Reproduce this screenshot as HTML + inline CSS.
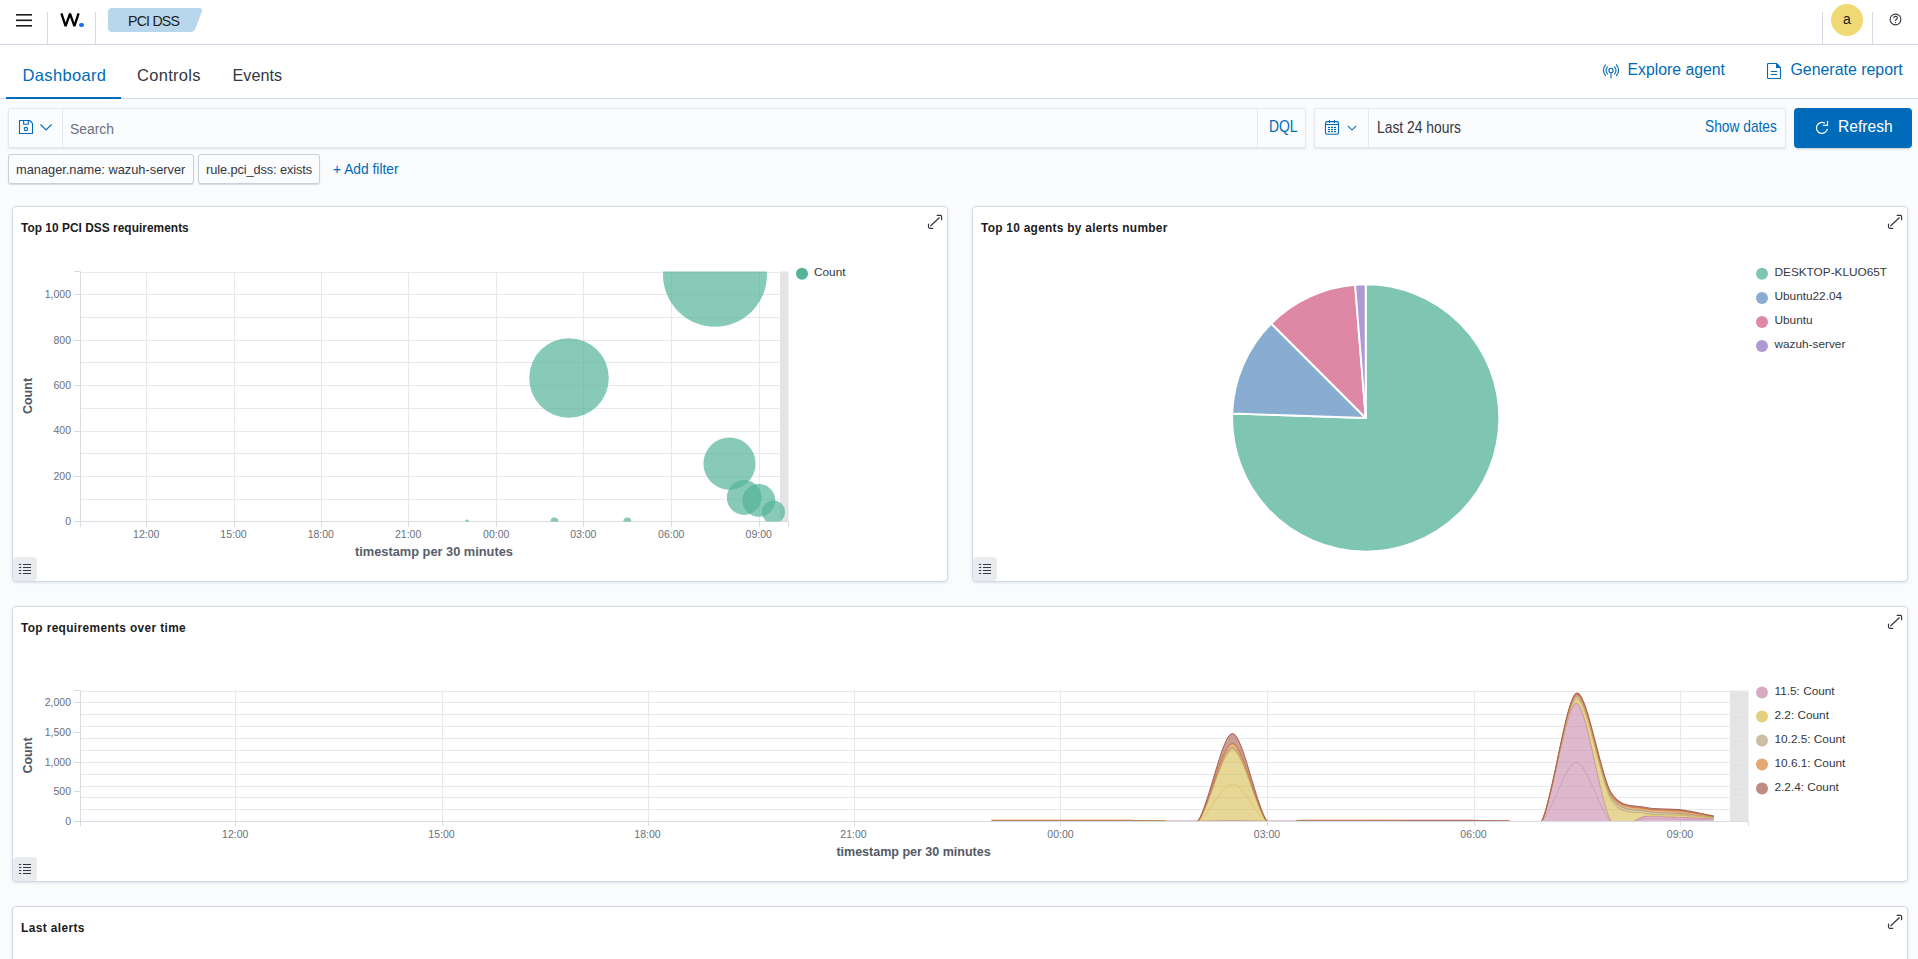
<!DOCTYPE html>
<html><head><meta charset="utf-8">
<style>
*{box-sizing:border-box;margin:0;padding:0}
html,body{width:1918px;height:959px;overflow:hidden;background:#FAFBFD;font-family:"Liberation Sans",sans-serif;color:#343741}
.abs{position:absolute}
.t{position:absolute;white-space:nowrap;line-height:1}
#hdr{position:absolute;left:0;top:0;width:1918px;height:45px;background:#fff;border-bottom:1px solid #D3DAE6}
.vsep{position:absolute;top:12px;width:1px;height:32px;background:#D3DAE6}
#tabs{position:absolute;left:0;top:45px;width:1918px;height:54px;background:#fff;border-bottom:1px solid #D3DAE6}
.panel{position:absolute;background:#fff;border:1px solid #D3DAE6;border-radius:4px;box-shadow:0 1px 2px rgba(152,162,179,.2),0 1px 5px -2px rgba(152,162,179,.2)}
.ptitle{position:absolute;font-weight:bold;font-size:11.9px;color:#1a1c21;white-space:nowrap;line-height:1}
.lgbtn{position:absolute;width:24px;height:24px;background:#E9EBEE;border-radius:4px}
</style></head><body>
<!-- header -->
<div id="hdr">
  <svg class="abs" style="left:16px;top:14px" width="16" height="13" viewBox="0 0 16 13"><rect x="0" y="0" width="16" height="1.6" fill="#1a1c21"/><rect x="0" y="5.5" width="16" height="1.6" fill="#1a1c21"/><rect x="0" y="11" width="16" height="1.6" fill="#1a1c21"/></svg>
  <div class="vsep" style="left:47px"></div>
  <svg class="abs" style="left:58px;top:11px" width="24" height="18" viewBox="58 11 24 18"><path d="M61.4 13.4 L65.6 26.2 L70 13.6 L74.4 26.2 L78.6 13.4" fill="none" stroke="#000" stroke-width="2.3" stroke-linejoin="miter" stroke-miterlimit="3"/></svg>
  <div class="abs" style="left:79.4px;top:22.5px;width:4.4px;height:4.4px;border-radius:50%;background:#1F6FEF"></div>
  <div class="vsep" style="left:95px"></div>
  <svg class="abs" style="left:108px;top:8px" width="95" height="24" viewBox="0 0 95 24"><path d="M4 0 H91 Q95 0 93.8 3.5 L87.5 20.5 Q86.3 24 82 24 H4 Q0 24 0 20 V4 Q0 0 4 0Z" fill="#B9D7EC"/></svg>
  <div class="t" style="left:128px;top:13.5px;font-size:14.2px;color:#1a1c21;letter-spacing:-0.8px">PCI DSS</div>
  <div class="vsep" style="left:1822px"></div>
  <div class="abs" style="left:1831px;top:4px;width:32px;height:32px;border-radius:50%;background:#F0D874"></div>
  <div class="t" style="left:1843px;top:12px;font-size:14px;color:#1a1c21">a</div>
  <div class="vsep" style="left:1872px"></div>
  <svg class="abs" style="left:1889.3px;top:13.3px" width="13" height="13" viewBox="0 0 13 13"><circle cx="6.5" cy="6.5" r="5.4" fill="none" stroke="#343741" stroke-width="1.1"/><path d="M4.7 5.2 Q4.7 3.4 6.5 3.4 Q8.3 3.4 8.3 5 Q8.3 6 7.2 6.6 Q6.5 7 6.5 8" fill="none" stroke="#343741" stroke-width="1.1"/><circle cx="6.5" cy="9.6" r=".7" fill="#343741"/></svg>
</div>
<!-- tabs -->
<div id="tabs">
  <div class="abs" style="left:6px;top:52px;width:115px;height:2px;background:#006BB8"></div>
  <div class="t" style="left:22.5px;top:22px;font-size:16.5px;color:#006BB8;letter-spacing:0.35px">Dashboard</div>
  <div class="t" style="left:137px;top:22px;font-size:16.5px;color:#343741;letter-spacing:0.3px">Controls</div>
  <div class="t" style="left:232.5px;top:22px;font-size:16.2px;color:#343741">Events</div>
  <svg class="abs" style="left:1602px;top:18px" width="18" height="16" viewBox="0 0 18 16"><g fill="none" stroke="#006BB8" stroke-width="1.1" stroke-linecap="round"><path d="M3.5 1.8 Q-0.7 7.2 3.5 12.6"/><path d="M14.5 1.8 Q18.7 7.2 14.5 12.6"/><path d="M5.5 3.9 Q2.5 7.35 5.5 10.8"/><path d="M12.5 3.9 Q15.5 7.35 12.5 10.8"/><circle cx="9" cy="7.4" r="2.1"/><path d="M9 9.6 V15"/></g></svg>
  <div class="t" style="left:1627.5px;top:17px;font-size:15.8px;color:#006BB8">Explore agent</div>
  <svg class="abs" style="left:1762px;top:13px" width="26" height="24" viewBox="1762 58 26 24"><g fill="none" stroke="#006BB8" stroke-width="1.1" stroke-linejoin="round"><path d="M1768.3 63.5H1776.5L1780.5 67.6V77.7Q1780.5 78.5 1779.7 78.5H1768.3Q1767.5 78.5 1767.5 77.7V64.3Q1767.5 63.5 1768.3 63.5Z"/><path d="M1771.3 71.5H1776.8M1771.3 74.5H1776.8" stroke-linecap="round"/></g><path d="M1776 63.2L1780.8 68H1776Z" fill="#006BB8"/></svg>
  <div class="t" style="left:1790.5px;top:17px;font-size:15.9px;color:#006BB8">Generate report</div>
</div>
<!-- query bar -->
<div class="abs" style="left:8px;top:108px;width:1298px;height:40px;background:#FBFCFD;border:1px solid #E3E8F0;border-radius:2px;box-shadow:0 1px 2px rgba(152,162,179,.25)"></div>
<div class="abs" style="left:62px;top:109px;width:1px;height:38px;background:#E3E8F0"></div>
<div class="abs" style="left:1257px;top:109px;width:1px;height:38px;background:#E3E8F0"></div>
<svg class="abs" style="left:18px;top:119px" width="17" height="16" viewBox="0 0 17 16"><g fill="none" stroke="#006BB8" stroke-width="1.1" stroke-linejoin="round"><path d="M1.5 1.5 H11.6 L14.5 4.4 V14.5 H1.5 Z"/><path d="M5.6 1.5 V5.3 H10.3 V1.5"/><circle cx="7.9" cy="10" r="1.65"/></g></svg>
<svg class="abs" style="left:39px;top:123px" width="14" height="9" viewBox="0 0 14 9"><path d="M1.5 1.5 L7 7 L12.5 1.5" fill="none" stroke="#006BB8" stroke-width="1.1"/></svg>
<div class="t" style="left:70px;top:121px;font-size:15.4px;color:#69707D;transform:scaleX(0.9);transform-origin:0 0">Search</div>
<div class="t" style="left:1269px;top:119px;font-size:15.8px;color:#006BB8;transform:scaleX(0.88);transform-origin:0 0">DQL</div>
<div class="abs" style="left:1314px;top:108px;width:472px;height:40px;background:#FBFCFD;border:1px solid #E3E8F0;border-radius:2px;box-shadow:0 1px 2px rgba(152,162,179,.25)"></div>
<div class="abs" style="left:1368px;top:109px;width:1px;height:38px;background:#E3E8F0"></div>
<svg class="abs" style="left:1318px;top:112px" width="48" height="30" viewBox="1318 112 48 30"><g fill="none" stroke="#006BB8" stroke-width="1.1"><rect x="1325.5" y="121.6" width="13" height="12.7" rx="1.6"/><path d="M1325.5 124.5H1338.5M1329.5 120V123M1334.4 120V123"/><path d="M1347.8 126.2L1352 129.8L1356.2 126.2"/></g><g fill="#006BB8"><rect x="1328" y="126.80000000000001" width="2" height="1.2"/><rect x="1328" y="128.9" width="2" height="1.2"/><rect x="1328" y="131.0" width="2" height="1.2"/><rect x="1331" y="126.80000000000001" width="2" height="1.2"/><rect x="1331" y="128.9" width="2" height="1.2"/><rect x="1331" y="131.0" width="2" height="1.2"/><rect x="1334" y="126.80000000000001" width="2" height="1.2"/><rect x="1334" y="128.9" width="2" height="1.2"/><rect x="1334" y="131.0" width="2" height="1.2"/></g></svg>

<div class="t" style="left:1377px;top:118.5px;font-size:16.4px;color:#343741;transform:scaleX(0.845);transform-origin:0 0">Last 24 hours</div>
<div class="t" style="left:1705px;top:118px;font-size:16.2px;color:#006BB8;transform:scaleX(0.85);transform-origin:0 0">Show dates</div>
<div class="abs" style="left:1794px;top:108px;width:118px;height:40px;background:#006BB8;border-radius:4px;box-shadow:0 2px 2px -1px rgba(54,97,126,.3)"></div>
<svg class="abs" style="left:1808px;top:112px" width="30" height="30" viewBox="0 0 30 30"><path d="M19.42 16.86A5.5 5.5 0 1 1 16.91 11.24" fill="none" stroke="#fff" stroke-width="1.2"/><path d="M15 13.3H19.5V9" fill="none" stroke="#fff" stroke-width="1.2"/></svg>
<div class="t" style="left:1838px;top:119px;font-size:16.6px;color:#fff;transform:scaleX(0.94);transform-origin:0 0">Refresh</div>
<!-- filters -->
<div class="abs" style="left:8px;top:154px;width:186px;height:30px;background:#FBFCFD;border:1px solid #C9CFD8;border-radius:3px;box-shadow:0 1px 1px rgba(152,162,179,.35)"></div>
<div class="t" style="left:16px;top:164px;font-size:12.8px;color:#343741">manager.name: wazuh-server</div>
<div class="abs" style="left:198px;top:154px;width:122px;height:30px;background:#FBFCFD;border:1px solid #C9CFD8;border-radius:3px;box-shadow:0 1px 1px rgba(152,162,179,.35)"></div>
<div class="t" style="left:206px;top:164px;font-size:12.8px;color:#343741;letter-spacing:-0.1px">rule.pci_dss: exists</div>
<div class="t" style="left:333px;top:160.5px;font-size:15px;color:#006BB8;transform:scaleX(0.92);transform-origin:0 0">+ Add filter</div>
<!-- panels -->
<div class="panel" style="left:12px;top:206px;width:936px;height:376px"></div>
<div class="panel" style="left:972px;top:206px;width:936px;height:376px"></div>
<div class="panel" style="left:12px;top:606px;width:1896px;height:276px"></div>
<div class="panel" style="left:12px;top:906px;width:1896px;height:100px"></div>
<!--CHART1-->
<svg class="abs" style="left:0;top:0" width="948" height="600" viewBox="0 0 948 600">
<defs><clipPath id="c1"><rect x="80.5" y="271.5" width="708" height="250"/></clipPath></defs>
<rect x="780" y="271.5" width="8.5" height="250" fill="#E4E4E4"/>
<path d="M80.5 521.5H788.5 M80.5 499.5H788.5 M80.5 476.5H788.5 M80.5 453.5H788.5 M80.5 431.5H788.5 M80.5 408.5H788.5 M80.5 385.5H788.5 M80.5 362.5H788.5 M80.5 340.5H788.5 M80.5 317.5H788.5 M80.5 294.5H788.5 M80.5 272.5H788.5" stroke="#E6E8EC" stroke-width="1" fill="none"/>
<path d="M146.5 271.5V521 M234.5 271.5V521 M321.5 271.5V521 M408.5 271.5V521 M496.5 271.5V521 M583.5 271.5V521 M671.5 271.5V521 M759.5 271.5V521" stroke="#E6E8EC" stroke-width="1" fill="none"/>
<path d="M80.5 271.5V527 M74 521.5H788.5 M788.5 521.5V527" stroke="#D7DBE2" stroke-width="1" fill="none"/>
<path d="M74 271.5H80.5 M74 521.5H80.5 M74 476.5H80.5 M74 431.5H80.5 M74 385.5H80.5 M74 340.5H80.5 M74 294.5H80.5 M146.5 521.5V527 M234.5 521.5V527 M321.5 521.5V527 M408.5 521.5V527 M496.5 521.5V527 M583.5 521.5V527 M671.5 521.5V527 M759.5 521.5V527" stroke="#D7DBE2" stroke-width="1" fill="none"/>
<g clip-path="url(#c1)" fill="#54B399" fill-opacity="0.7">
<circle cx="715" cy="274.7" r="52"/>
<circle cx="569" cy="378" r="39.8"/>
<circle cx="729.5" cy="463.6" r="26.1"/>
<circle cx="744.2" cy="497.5" r="17.4"/>
<circle cx="758.8" cy="500.3" r="16.4"/>
<circle cx="773.4" cy="512" r="11.6"/>
<circle cx="467" cy="521.4" r="2"/>
<circle cx="554.4" cy="521.4" r="4"/>
<circle cx="627.3" cy="521.4" r="4"/>
</g>
<g font-family="Liberation Sans" font-size="10.5" fill="#69707D" text-anchor="end">
<text x="71" y="525.2">0</text>
<text x="71" y="479.8">200</text>
<text x="71" y="434.3">400</text>
<text x="71" y="388.9">600</text>
<text x="71" y="343.5">800</text>
<text x="71" y="298.0">1,000</text>
</g>
<g font-family="Liberation Sans" font-size="10.5" fill="#69707D" text-anchor="middle">
<text x="146.2" y="537.8">12:00</text>
<text x="233.5" y="537.8">15:00</text>
<text x="320.8" y="537.8">18:00</text>
<text x="408.1" y="537.8">21:00</text>
<text x="496.2" y="537.8">00:00</text>
<text x="583.3" y="537.8">03:00</text>
<text x="671.2" y="537.8">06:00</text>
<text x="758.7" y="537.8">09:00</text>
</g>
<text x="434" y="555.8" font-family="Liberation Sans" font-size="12.8" font-weight="bold" fill="#575E6B" text-anchor="middle">timestamp per 30 minutes</text>
<text transform="translate(31.6 396) rotate(-90)" font-family="Liberation Sans" font-size="12.5" font-weight="bold" fill="#535966" text-anchor="middle">Count</text>
<circle cx="802" cy="273.8" r="6" fill="#54B399"/>
<text x="814" y="276" font-family="Liberation Sans" font-size="11.8" fill="#343741">Count</text>
</svg>
<div class="ptitle" style="left:21px;top:223px;letter-spacing:0.03px">Top 10 PCI DSS requirements</div>
<!--CHART2-->
<svg class="abs" style="left:960px;top:200px" width="950" height="390" viewBox="960 200 950 390">
<path d="M1365.7 418L1365.70 284.40A133.6 133.6 0 1 1 1232.17 413.57Z" fill="#7FC6B2" stroke="#fff" stroke-width="1.9" stroke-linejoin="round"/>
<path d="M1365.7 418L1232.17 413.57A133.6 133.6 0 0 1 1271.23 323.53Z" fill="#89ADD0" stroke="#fff" stroke-width="1.9" stroke-linejoin="round"/>
<path d="M1365.7 418L1271.23 323.53A133.6 133.6 0 0 1 1355.10 284.82Z" fill="#DE88A5" stroke="#fff" stroke-width="1.9" stroke-linejoin="round"/>
<path d="M1365.7 418L1355.10 284.82A133.6 133.6 0 0 1 1365.70 284.40Z" fill="#AE9AD0" stroke="#fff" stroke-width="1.9" stroke-linejoin="round"/>
<g font-family="Liberation Sans" font-size="11.8" fill="#343741">
<circle cx="1762" cy="273.8" r="6" fill="#7FC6B2"/>
<text x="1774.5" y="275.6">DESKTOP-KLUO65T</text>
<circle cx="1762" cy="297.9" r="6" fill="#89ADD0"/>
<text x="1774.5" y="299.7">Ubuntu22.04</text>
<circle cx="1762" cy="321.9" r="6" fill="#DE88A5"/>
<text x="1774.5" y="323.7">Ubuntu</text>
<circle cx="1762" cy="346.0" r="6" fill="#AE9AD0"/>
<text x="1774.5" y="347.8">wazuh-server</text>
</g></svg>
<div class="ptitle" style="left:981px;top:223px;letter-spacing:0.28px">Top 10 agents by alerts number</div>
<!--CHART3-->
<svg class="abs" style="left:0;top:600px" width="1918" height="290" viewBox="0 600 1918 290">
<defs><clipPath id="c3"><rect x="80.5" y="690" width="1668" height="131.6"/></clipPath></defs>
<rect x="1730" y="690.5" width="18.5" height="131" fill="#E4E4E4"/>
<path d="M80.5 821.5H1748.5 M80.5 809.5H1748.5 M80.5 797.5H1748.5 M80.5 786.5H1748.5 M80.5 774.5H1748.5 M80.5 762.5H1748.5 M80.5 750.5H1748.5 M80.5 738.5H1748.5 M80.5 726.5H1748.5 M80.5 714.5H1748.5 M80.5 702.5H1748.5 M80.5 691.5H1748.5" stroke="#E6E8EC" fill="none"/>
<path d="M235.5 690.5V821 M442.5 690.5V821 M648.5 690.5V821 M854.5 690.5V821 M1060.5 690.5V821 M1267.5 690.5V821 M1474.5 690.5V821 M1680.5 690.5V821" stroke="#E6E8EC" fill="none"/>
<g clip-path="url(#c3)">
<path d="M991.73 820.98C991.73 820.98 1015.80 820.98 1026.12 820.98C1036.43 820.98 1050.18 820.98 1060.50 820.98C1070.82 820.98 1084.57 820.98 1094.88 820.98C1105.20 820.98 1118.95 820.96 1129.27 820.98C1139.59 821.00 1153.34 821.08 1163.65 821.10C1173.97 821.12 1187.72 821.19 1198.04 821.10C1208.36 821.01 1222.11 820.51 1232.42 820.51C1242.74 820.51 1256.49 821.03 1266.81 821.10C1277.13 821.17 1290.88 821.00 1301.19 820.98C1311.51 820.96 1325.26 820.98 1335.58 820.98C1345.90 820.98 1359.65 820.98 1369.96 820.98C1380.28 820.98 1394.03 820.98 1404.35 820.98C1414.67 820.98 1428.42 820.98 1438.73 820.98C1449.05 820.98 1462.80 820.96 1473.12 820.98C1483.44 821.00 1497.19 821.08 1507.51 821.10C1517.82 821.12 1531.57 838.76 1541.89 821.10C1552.21 803.44 1565.96 703.39 1576.28 703.39C1586.59 703.39 1600.34 804.16 1610.66 821.10C1620.98 838.04 1634.73 816.93 1645.05 816.36C1655.36 815.79 1669.11 816.95 1679.43 817.30C1689.75 817.66 1713.82 818.73 1713.82 818.73L1713.82 821.10C1713.82 821.10 1689.75 821.10 1679.43 821.10C1669.11 821.10 1655.36 821.10 1645.05 821.10C1634.73 821.10 1620.98 821.10 1610.66 821.10C1600.34 821.10 1586.59 821.10 1576.28 821.10C1565.96 821.10 1552.21 821.10 1541.89 821.10C1531.57 821.10 1517.82 821.10 1507.51 821.10C1497.19 821.10 1483.44 821.10 1473.12 821.10C1462.80 821.10 1449.05 821.10 1438.73 821.10C1428.42 821.10 1414.67 821.10 1404.35 821.10C1394.03 821.10 1380.28 821.10 1369.96 821.10C1359.65 821.10 1345.90 821.10 1335.58 821.10C1325.26 821.10 1311.51 821.10 1301.19 821.10C1290.88 821.10 1277.13 821.10 1266.81 821.10C1256.49 821.10 1242.74 821.10 1232.42 821.10C1222.11 821.10 1208.36 821.10 1198.04 821.10C1187.72 821.10 1173.97 821.10 1163.65 821.10C1153.34 821.10 1139.59 821.10 1129.27 821.10C1118.95 821.10 1105.20 821.10 1094.88 821.10C1084.57 821.10 1070.82 821.10 1060.50 821.10C1050.18 821.10 1036.43 821.10 1026.12 821.10C1015.80 821.10 991.73 821.10 991.73 821.10Z" fill="#CA8EAE" fill-opacity="0.62" stroke="none"/>
<path d="M991.73 820.98C991.73 820.98 1015.80 820.98 1026.12 820.98C1036.43 820.98 1050.18 820.98 1060.50 820.98C1070.82 820.98 1084.57 820.98 1094.88 820.98C1105.20 820.98 1118.95 820.96 1129.27 820.98C1139.59 821.00 1153.34 821.08 1163.65 821.10C1173.97 821.12 1187.72 821.19 1198.04 821.10C1208.36 821.01 1222.11 820.51 1232.42 820.51C1242.74 820.51 1256.49 821.03 1266.81 821.10C1277.13 821.17 1290.88 821.00 1301.19 820.98C1311.51 820.96 1325.26 820.98 1335.58 820.98C1345.90 820.98 1359.65 820.98 1369.96 820.98C1380.28 820.98 1394.03 820.98 1404.35 820.98C1414.67 820.98 1428.42 820.98 1438.73 820.98C1449.05 820.98 1462.80 820.96 1473.12 820.98C1483.44 821.00 1497.19 821.08 1507.51 821.10C1517.82 821.12 1531.57 838.76 1541.89 821.10C1552.21 803.44 1565.96 703.39 1576.28 703.39C1586.59 703.39 1600.34 804.16 1610.66 821.10C1620.98 838.04 1634.73 816.93 1645.05 816.36C1655.36 815.79 1669.11 816.95 1679.43 817.30C1689.75 817.66 1713.82 818.73 1713.82 818.73" fill="none" stroke="#CA8EAE" stroke-width="1.1"/>
<path d="M991.73 820.80C991.73 820.80 1015.80 820.80 1026.12 820.80C1036.43 820.80 1050.18 820.80 1060.50 820.80C1070.82 820.80 1084.57 820.80 1094.88 820.80C1105.20 820.80 1118.95 820.76 1129.27 820.80C1139.59 820.85 1153.34 821.06 1163.65 821.10C1173.97 821.14 1187.72 831.79 1198.04 821.10C1208.36 810.41 1222.11 749.82 1232.42 749.82C1242.74 749.82 1256.49 810.44 1266.81 821.10C1277.13 831.76 1290.88 820.90 1301.19 820.86C1311.51 820.83 1325.26 820.86 1335.58 820.86C1345.90 820.86 1359.65 820.86 1369.96 820.86C1380.28 820.86 1394.03 820.86 1404.35 820.86C1414.67 820.86 1428.42 820.86 1438.73 820.86C1449.05 820.86 1462.80 820.83 1473.12 820.86C1483.44 820.90 1497.19 821.06 1507.51 821.10C1517.82 821.14 1531.57 839.42 1541.89 821.10C1552.21 802.78 1565.96 702.23 1576.28 698.94C1586.59 695.65 1600.34 781.99 1610.66 799.16C1620.98 816.33 1634.73 810.99 1645.05 813.39C1655.36 815.79 1669.11 814.50 1679.43 815.17C1689.75 815.84 1713.82 817.84 1713.82 817.84L1713.82 818.73C1713.82 818.73 1689.75 817.66 1679.43 817.30C1669.11 816.95 1655.36 815.79 1645.05 816.36C1634.73 816.93 1620.98 838.04 1610.66 821.10C1600.34 804.16 1586.59 703.39 1576.28 703.39C1565.96 703.39 1552.21 803.44 1541.89 821.10C1531.57 838.76 1517.82 821.12 1507.51 821.10C1497.19 821.08 1483.44 821.00 1473.12 820.98C1462.80 820.96 1449.05 820.98 1438.73 820.98C1428.42 820.98 1414.67 820.98 1404.35 820.98C1394.03 820.98 1380.28 820.98 1369.96 820.98C1359.65 820.98 1345.90 820.98 1335.58 820.98C1325.26 820.98 1311.51 820.96 1301.19 820.98C1290.88 821.00 1277.13 821.17 1266.81 821.10C1256.49 821.03 1242.74 820.51 1232.42 820.51C1222.11 820.51 1208.36 821.01 1198.04 821.10C1187.72 821.19 1173.97 821.12 1163.65 821.10C1153.34 821.08 1139.59 821.00 1129.27 820.98C1118.95 820.96 1105.20 820.98 1094.88 820.98C1084.57 820.98 1070.82 820.98 1060.50 820.98C1050.18 820.98 1036.43 820.98 1026.12 820.98C1015.80 820.98 991.73 820.98 991.73 820.98Z" fill="#D6BF57" fill-opacity="0.62" stroke="none"/>
<path d="M991.73 820.80C991.73 820.80 1015.80 820.80 1026.12 820.80C1036.43 820.80 1050.18 820.80 1060.50 820.80C1070.82 820.80 1084.57 820.80 1094.88 820.80C1105.20 820.80 1118.95 820.76 1129.27 820.80C1139.59 820.85 1153.34 821.06 1163.65 821.10C1173.97 821.14 1187.72 831.79 1198.04 821.10C1208.36 810.41 1222.11 749.82 1232.42 749.82C1242.74 749.82 1256.49 810.44 1266.81 821.10C1277.13 831.76 1290.88 820.90 1301.19 820.86C1311.51 820.83 1325.26 820.86 1335.58 820.86C1345.90 820.86 1359.65 820.86 1369.96 820.86C1380.28 820.86 1394.03 820.86 1404.35 820.86C1414.67 820.86 1428.42 820.86 1438.73 820.86C1449.05 820.86 1462.80 820.83 1473.12 820.86C1483.44 820.90 1497.19 821.06 1507.51 821.10C1517.82 821.14 1531.57 839.42 1541.89 821.10C1552.21 802.78 1565.96 702.23 1576.28 698.94C1586.59 695.65 1600.34 781.99 1610.66 799.16C1620.98 816.33 1634.73 810.99 1645.05 813.39C1655.36 815.79 1669.11 814.50 1679.43 815.17C1689.75 815.84 1713.82 817.84 1713.82 817.84" fill="none" stroke="#D6BF57" stroke-width="1.1"/>
<path d="M991.73 820.68C991.73 820.68 1015.80 820.68 1026.12 820.68C1036.43 820.68 1050.18 820.68 1060.50 820.68C1070.82 820.68 1084.57 820.68 1094.88 820.68C1105.20 820.68 1118.95 820.62 1129.27 820.68C1139.59 820.75 1153.34 821.04 1163.65 821.10C1173.97 821.16 1187.72 832.12 1198.04 821.10C1208.36 810.08 1222.11 747.63 1232.42 747.63C1242.74 747.63 1256.49 810.13 1266.81 821.10C1277.13 832.07 1290.88 820.80 1301.19 820.74C1311.51 820.69 1325.26 820.74 1335.58 820.74C1345.90 820.74 1359.65 820.74 1369.96 820.74C1380.28 820.74 1394.03 820.74 1404.35 820.74C1414.67 820.74 1428.42 820.74 1438.73 820.74C1449.05 820.74 1462.80 820.69 1473.12 820.74C1483.44 820.80 1497.19 821.05 1507.51 821.10C1517.82 821.15 1531.57 839.78 1541.89 821.10C1552.21 802.42 1565.96 700.31 1576.28 696.57C1586.59 692.83 1600.34 779.03 1610.66 796.19C1620.98 813.36 1634.73 808.44 1645.05 811.02C1655.36 813.60 1669.11 812.46 1679.43 813.39C1689.75 814.32 1713.82 817.25 1713.82 817.25L1713.82 817.84C1713.82 817.84 1689.75 815.84 1679.43 815.17C1669.11 814.50 1655.36 815.79 1645.05 813.39C1634.73 810.99 1620.98 816.33 1610.66 799.16C1600.34 781.99 1586.59 695.65 1576.28 698.94C1565.96 702.23 1552.21 802.78 1541.89 821.10C1531.57 839.42 1517.82 821.14 1507.51 821.10C1497.19 821.06 1483.44 820.90 1473.12 820.86C1462.80 820.83 1449.05 820.86 1438.73 820.86C1428.42 820.86 1414.67 820.86 1404.35 820.86C1394.03 820.86 1380.28 820.86 1369.96 820.86C1359.65 820.86 1345.90 820.86 1335.58 820.86C1325.26 820.86 1311.51 820.83 1301.19 820.86C1290.88 820.90 1277.13 831.76 1266.81 821.10C1256.49 810.44 1242.74 749.82 1232.42 749.82C1222.11 749.82 1208.36 810.41 1198.04 821.10C1187.72 831.79 1173.97 821.14 1163.65 821.10C1153.34 821.06 1139.59 820.85 1129.27 820.80C1118.95 820.76 1105.20 820.80 1094.88 820.80C1084.57 820.80 1070.82 820.80 1060.50 820.80C1050.18 820.80 1036.43 820.80 1026.12 820.80C1015.80 820.80 991.73 820.80 991.73 820.80Z" fill="#B9A888" fill-opacity="0.62" stroke="none"/>
<path d="M991.73 820.68C991.73 820.68 1015.80 820.68 1026.12 820.68C1036.43 820.68 1050.18 820.68 1060.50 820.68C1070.82 820.68 1084.57 820.68 1094.88 820.68C1105.20 820.68 1118.95 820.62 1129.27 820.68C1139.59 820.75 1153.34 821.04 1163.65 821.10C1173.97 821.16 1187.72 832.12 1198.04 821.10C1208.36 810.08 1222.11 747.63 1232.42 747.63C1242.74 747.63 1256.49 810.13 1266.81 821.10C1277.13 832.07 1290.88 820.80 1301.19 820.74C1311.51 820.69 1325.26 820.74 1335.58 820.74C1345.90 820.74 1359.65 820.74 1369.96 820.74C1380.28 820.74 1394.03 820.74 1404.35 820.74C1414.67 820.74 1428.42 820.74 1438.73 820.74C1449.05 820.74 1462.80 820.69 1473.12 820.74C1483.44 820.80 1497.19 821.05 1507.51 821.10C1517.82 821.15 1531.57 839.78 1541.89 821.10C1552.21 802.42 1565.96 700.31 1576.28 696.57C1586.59 692.83 1600.34 779.03 1610.66 796.19C1620.98 813.36 1634.73 808.44 1645.05 811.02C1655.36 813.60 1669.11 812.46 1679.43 813.39C1689.75 814.32 1713.82 817.25 1713.82 817.25" fill="none" stroke="#B9A888" stroke-width="1.1"/>
<path d="M991.73 820.51C991.73 820.51 1015.80 820.51 1026.12 820.51C1036.43 820.51 1050.18 820.51 1060.50 820.51C1070.82 820.51 1084.57 820.51 1094.88 820.51C1105.20 820.51 1118.95 820.42 1129.27 820.51C1139.59 820.60 1153.34 821.01 1163.65 821.10C1173.97 821.19 1187.72 832.72 1198.04 821.10C1208.36 809.48 1222.11 743.65 1232.42 743.65C1242.74 743.65 1256.49 809.55 1266.81 821.10C1277.13 832.65 1290.88 820.70 1301.19 820.63C1311.51 820.55 1325.26 820.63 1335.58 820.63C1345.90 820.63 1359.65 820.63 1369.96 820.63C1380.28 820.63 1394.03 820.63 1404.35 820.63C1414.67 820.63 1428.42 820.63 1438.73 820.63C1449.05 820.63 1462.80 820.55 1473.12 820.63C1483.44 820.70 1497.19 821.03 1507.51 821.10C1517.82 821.17 1531.57 840.05 1541.89 821.10C1552.21 802.15 1565.96 698.88 1576.28 694.79C1586.59 690.70 1600.34 776.74 1610.66 793.82C1620.98 810.90 1634.73 806.07 1645.05 808.65C1655.36 811.23 1669.11 809.82 1679.43 811.02C1689.75 812.22 1713.82 816.65 1713.82 816.65L1713.82 817.25C1713.82 817.25 1689.75 814.32 1679.43 813.39C1669.11 812.46 1655.36 813.60 1645.05 811.02C1634.73 808.44 1620.98 813.36 1610.66 796.19C1600.34 779.03 1586.59 692.83 1576.28 696.57C1565.96 700.31 1552.21 802.42 1541.89 821.10C1531.57 839.78 1517.82 821.15 1507.51 821.10C1497.19 821.05 1483.44 820.80 1473.12 820.74C1462.80 820.69 1449.05 820.74 1438.73 820.74C1428.42 820.74 1414.67 820.74 1404.35 820.74C1394.03 820.74 1380.28 820.74 1369.96 820.74C1359.65 820.74 1345.90 820.74 1335.58 820.74C1325.26 820.74 1311.51 820.69 1301.19 820.74C1290.88 820.80 1277.13 832.07 1266.81 821.10C1256.49 810.13 1242.74 747.63 1232.42 747.63C1222.11 747.63 1208.36 810.08 1198.04 821.10C1187.72 832.12 1173.97 821.16 1163.65 821.10C1153.34 821.04 1139.59 820.75 1129.27 820.68C1118.95 820.62 1105.20 820.68 1094.88 820.68C1084.57 820.68 1070.82 820.68 1060.50 820.68C1050.18 820.68 1036.43 820.68 1026.12 820.68C1015.80 820.68 991.73 820.68 991.73 820.68Z" fill="#DA8B45" fill-opacity="0.62" stroke="none"/>
<path d="M991.73 820.51C991.73 820.51 1015.80 820.51 1026.12 820.51C1036.43 820.51 1050.18 820.51 1060.50 820.51C1070.82 820.51 1084.57 820.51 1094.88 820.51C1105.20 820.51 1118.95 820.42 1129.27 820.51C1139.59 820.60 1153.34 821.01 1163.65 821.10C1173.97 821.19 1187.72 832.72 1198.04 821.10C1208.36 809.48 1222.11 743.65 1232.42 743.65C1242.74 743.65 1256.49 809.55 1266.81 821.10C1277.13 832.65 1290.88 820.70 1301.19 820.63C1311.51 820.55 1325.26 820.63 1335.58 820.63C1345.90 820.63 1359.65 820.63 1369.96 820.63C1380.28 820.63 1394.03 820.63 1404.35 820.63C1414.67 820.63 1428.42 820.63 1438.73 820.63C1449.05 820.63 1462.80 820.55 1473.12 820.63C1483.44 820.70 1497.19 821.03 1507.51 821.10C1517.82 821.17 1531.57 840.05 1541.89 821.10C1552.21 802.15 1565.96 698.88 1576.28 694.79C1586.59 690.70 1600.34 776.74 1610.66 793.82C1620.98 810.90 1634.73 806.07 1645.05 808.65C1655.36 811.23 1669.11 809.82 1679.43 811.02C1689.75 812.22 1713.82 816.65 1713.82 816.65" fill="none" stroke="#DA8B45" stroke-width="1.1"/>
<path d="M991.73 820.27C991.73 820.27 1015.80 820.27 1026.12 820.27C1036.43 820.27 1050.18 820.27 1060.50 820.27C1070.82 820.27 1084.57 820.27 1094.88 820.27C1105.20 820.27 1118.95 820.15 1129.27 820.27C1139.59 820.39 1153.34 820.98 1163.65 821.10C1173.97 821.22 1187.72 834.25 1198.04 821.10C1208.36 807.95 1222.11 733.45 1232.42 733.45C1242.74 733.45 1256.49 808.06 1266.81 821.10C1277.13 834.14 1290.88 820.50 1301.19 820.39C1311.51 820.28 1325.26 820.39 1335.58 820.39C1345.90 820.39 1359.65 820.39 1369.96 820.39C1380.28 820.39 1394.03 820.39 1404.35 820.39C1414.67 820.39 1428.42 820.39 1438.73 820.39C1449.05 820.39 1462.80 820.28 1473.12 820.39C1483.44 820.50 1497.19 820.99 1507.51 821.10C1517.82 821.21 1531.57 840.28 1541.89 821.10C1552.21 801.92 1565.96 697.61 1576.28 693.25C1586.59 688.89 1600.34 774.93 1610.66 792.04C1620.98 809.16 1634.73 804.70 1645.05 807.34C1655.36 809.98 1669.11 808.34 1679.43 809.66C1689.75 810.97 1713.82 816.12 1713.82 816.12L1713.82 816.65C1713.82 816.65 1689.75 812.22 1679.43 811.02C1669.11 809.82 1655.36 811.23 1645.05 808.65C1634.73 806.07 1620.98 810.90 1610.66 793.82C1600.34 776.74 1586.59 690.70 1576.28 694.79C1565.96 698.88 1552.21 802.15 1541.89 821.10C1531.57 840.05 1517.82 821.17 1507.51 821.10C1497.19 821.03 1483.44 820.70 1473.12 820.63C1462.80 820.55 1449.05 820.63 1438.73 820.63C1428.42 820.63 1414.67 820.63 1404.35 820.63C1394.03 820.63 1380.28 820.63 1369.96 820.63C1359.65 820.63 1345.90 820.63 1335.58 820.63C1325.26 820.63 1311.51 820.55 1301.19 820.63C1290.88 820.70 1277.13 832.65 1266.81 821.10C1256.49 809.55 1242.74 743.65 1232.42 743.65C1222.11 743.65 1208.36 809.48 1198.04 821.10C1187.72 832.72 1173.97 821.19 1163.65 821.10C1153.34 821.01 1139.59 820.60 1129.27 820.51C1118.95 820.42 1105.20 820.51 1094.88 820.51C1084.57 820.51 1070.82 820.51 1060.50 820.51C1050.18 820.51 1036.43 820.51 1026.12 820.51C1015.80 820.51 991.73 820.51 991.73 820.51Z" fill="#AA6556" fill-opacity="0.62" stroke="none"/>
<path d="M991.73 820.27C991.73 820.27 1015.80 820.27 1026.12 820.27C1036.43 820.27 1050.18 820.27 1060.50 820.27C1070.82 820.27 1084.57 820.27 1094.88 820.27C1105.20 820.27 1118.95 820.15 1129.27 820.27C1139.59 820.39 1153.34 820.98 1163.65 821.10C1173.97 821.22 1187.72 834.25 1198.04 821.10C1208.36 807.95 1222.11 733.45 1232.42 733.45C1242.74 733.45 1256.49 808.06 1266.81 821.10C1277.13 834.14 1290.88 820.50 1301.19 820.39C1311.51 820.28 1325.26 820.39 1335.58 820.39C1345.90 820.39 1359.65 820.39 1369.96 820.39C1380.28 820.39 1394.03 820.39 1404.35 820.39C1414.67 820.39 1428.42 820.39 1438.73 820.39C1449.05 820.39 1462.80 820.28 1473.12 820.39C1483.44 820.50 1497.19 820.99 1507.51 821.10C1517.82 821.21 1531.57 840.28 1541.89 821.10C1552.21 801.92 1565.96 697.61 1576.28 693.25C1586.59 688.89 1600.34 774.93 1610.66 792.04C1620.98 809.16 1634.73 804.70 1645.05 807.34C1655.36 809.98 1669.11 808.34 1679.43 809.66C1689.75 810.97 1713.82 816.12 1713.82 816.12" fill="none" stroke="#AA6556" stroke-width="1.1"/>
<path d="M991.73 820.95C991.73 820.95 1015.80 820.95 1026.12 820.95C1036.43 820.95 1050.18 820.95 1060.50 820.95C1070.82 820.95 1084.57 820.95 1094.88 820.95C1105.20 820.95 1118.95 820.92 1129.27 820.95C1139.59 820.97 1153.34 821.08 1163.65 821.10C1173.97 821.12 1187.72 826.66 1198.04 821.10C1208.36 815.54 1222.11 784.04 1232.42 784.04C1242.74 784.04 1256.49 815.56 1266.81 821.10C1277.13 826.64 1290.88 821.00 1301.19 820.98C1311.51 820.96 1325.26 820.98 1335.58 820.98C1345.90 820.98 1359.65 820.98 1369.96 820.98C1380.28 820.98 1404.35 820.98 1404.35 820.98" fill="none" stroke="#D6BF57" stroke-opacity="0.6" stroke-width="1"/>
<path d="M1404.35 821.04C1404.35 821.04 1428.42 821.04 1438.73 821.04C1449.05 821.04 1462.80 821.03 1473.12 821.04C1483.44 821.05 1497.19 821.09 1507.51 821.10C1517.82 821.11 1531.57 829.93 1541.89 821.10C1552.21 812.27 1565.96 762.24 1576.28 762.24C1586.59 762.24 1600.34 812.63 1610.66 821.10C1620.98 829.57 1634.73 819.01 1645.05 818.73C1655.36 818.44 1669.11 819.02 1679.43 819.20C1689.75 819.38 1713.82 819.91 1713.82 819.91" fill="none" stroke="#CA8EAE" stroke-opacity="0.6" stroke-width="1"/>
</g>
<path d="M80.5 690.5V826 M74 821.5H1748.5 M1748.5 821.5V826" stroke="#D7DBE2" fill="none"/>
<path d="M74 821.5H80.5 M74 791.5H80.5 M74 762.5H80.5 M74 732.5H80.5 M74 702.5H80.5 M74 690.5H80.5 M235.5 821.5V826 M442.5 821.5V826 M648.5 821.5V826 M854.5 821.5V826 M1060.5 821.5V826 M1267.5 821.5V826 M1474.5 821.5V826 M1680.5 821.5V826" stroke="#D7DBE2" fill="none"/>
<g font-family="Liberation Sans" font-size="10.5" fill="#69707D" text-anchor="end">
<text x="71" y="824.9">0</text>
<text x="71" y="795.2">500</text>
<text x="71" y="765.6">1,000</text>
<text x="71" y="735.9">1,500</text>
<text x="71" y="706.3">2,000</text>
</g><g font-family="Liberation Sans" font-size="10.5" fill="#69707D" text-anchor="middle">
<text x="235.2" y="837.5">12:00</text>
<text x="441.5" y="837.5">15:00</text>
<text x="647.5" y="837.5">18:00</text>
<text x="853.5" y="837.5">21:00</text>
<text x="1060.5" y="837.5">00:00</text>
<text x="1267" y="837.5">03:00</text>
<text x="1473.5" y="837.5">06:00</text>
<text x="1680" y="837.5">09:00</text>
</g>
<text x="913.5" y="855.8" font-family="Liberation Sans" font-size="12.5" font-weight="bold" fill="#535966" text-anchor="middle">timestamp per 30 minutes</text>
<text transform="translate(31.6 755.5) rotate(-90)" font-family="Liberation Sans" font-size="12.5" font-weight="bold" fill="#535966" text-anchor="middle">Count</text>
<g font-family="Liberation Sans" font-size="11.8" fill="#343741">
<circle cx="1762" cy="692.5" r="6" fill="#D7AAC3"/>
<text x="1774.5" y="694.7">11.5: Count</text>
<circle cx="1762" cy="716.5" r="6" fill="#E3D07F"/>
<text x="1774.5" y="718.7">2.2: Count</text>
<circle cx="1762" cy="740.5" r="6" fill="#CCBEA4"/>
<text x="1774.5" y="742.7">10.2.5: Count</text>
<circle cx="1762" cy="764.5" r="6" fill="#E5A772"/>
<text x="1774.5" y="766.7">10.6.1: Count</text>
<circle cx="1762" cy="788.5" r="6" fill="#C08B80"/>
<text x="1774.5" y="790.7">2.2.4: Count</text>
</g></svg>
<div class="ptitle" style="left:21px;top:623px;letter-spacing:0.36px">Top requirements over time</div>
<div class="ptitle" style="left:21px;top:923px;letter-spacing:0.4px">Last alerts</div>
<svg class="abs" style="left:926px;top:213px" width="18" height="18" viewBox="926 213 18 18"><g fill="none" stroke="#343741" stroke-width="1.2" stroke-linecap="round" stroke-linejoin="round"><path d="M937.2 215.4H940.4Q941.6 215.4 941.6 216.6V219.7"/><path d="M928.5 224.2V227.1Q928.5 228.3 929.7 228.3H932.8"/><path d="M930.8 225.8L939.2 217.7"/></g></svg><svg class="abs" style="left:1886px;top:213px" width="18" height="18" viewBox="926 213 18 18"><g fill="none" stroke="#343741" stroke-width="1.2" stroke-linecap="round" stroke-linejoin="round"><path d="M937.2 215.4H940.4Q941.6 215.4 941.6 216.6V219.7"/><path d="M928.5 224.2V227.1Q928.5 228.3 929.7 228.3H932.8"/><path d="M930.8 225.8L939.2 217.7"/></g></svg><svg class="abs" style="left:1886px;top:613px" width="18" height="18" viewBox="926 213 18 18"><g fill="none" stroke="#343741" stroke-width="1.2" stroke-linecap="round" stroke-linejoin="round"><path d="M937.2 215.4H940.4Q941.6 215.4 941.6 216.6V219.7"/><path d="M928.5 224.2V227.1Q928.5 228.3 929.7 228.3H932.8"/><path d="M930.8 225.8L939.2 217.7"/></g></svg><svg class="abs" style="left:1886px;top:913px" width="18" height="18" viewBox="926 213 18 18"><g fill="none" stroke="#343741" stroke-width="1.2" stroke-linecap="round" stroke-linejoin="round"><path d="M937.2 215.4H940.4Q941.6 215.4 941.6 216.6V219.7"/><path d="M928.5 224.2V227.1Q928.5 228.3 929.7 228.3H932.8"/><path d="M930.8 225.8L939.2 217.7"/></g></svg><div class="lgbtn" style="left:13px;top:557px"></div><svg class="abs" style="left:13px;top:557px" width="24" height="24" viewBox="0 0 24 24"><g stroke="#343741" stroke-width="1.05"><path d="M6 7.5H8.2M6 10.5H8.2M6 13.5H8.2M6 16.5H8.2"/><path d="M10 7.5H18M10 10.5H18M10 13.5H18M10 16.5H18"/></g></svg><div class="lgbtn" style="left:973px;top:557px"></div><svg class="abs" style="left:973px;top:557px" width="24" height="24" viewBox="0 0 24 24"><g stroke="#343741" stroke-width="1.05"><path d="M6 7.5H8.2M6 10.5H8.2M6 13.5H8.2M6 16.5H8.2"/><path d="M10 7.5H18M10 10.5H18M10 13.5H18M10 16.5H18"/></g></svg><div class="lgbtn" style="left:13px;top:857px"></div><svg class="abs" style="left:13px;top:857px" width="24" height="24" viewBox="0 0 24 24"><g stroke="#343741" stroke-width="1.05"><path d="M6 7.5H8.2M6 10.5H8.2M6 13.5H8.2M6 16.5H8.2"/><path d="M10 7.5H18M10 10.5H18M10 13.5H18M10 16.5H18"/></g></svg>
</body></html>
